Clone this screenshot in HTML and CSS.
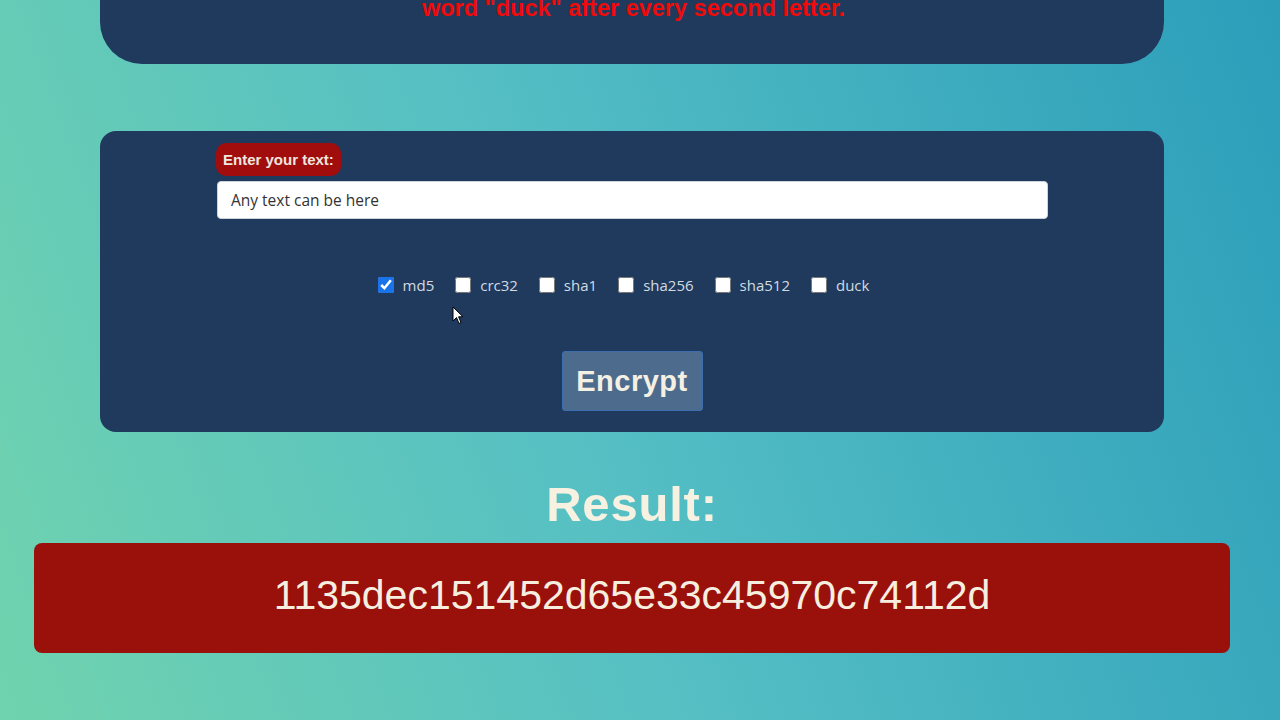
FILE: index.html
```html
<!DOCTYPE html>
<html lang="en">
<head>
<meta charset="utf-8">
<title>Encrypt</title>
<link rel="stylesheet" href="styles.css">
</head>
<body>
<div class="page">
  <section class="card card-info">
    <p class="info-text">word "duck" after every second letter.</p>
  </section>

  <section class="card card-form">
    <div class="field">
      <span class="field-label">Enter your text:</span>
      <input class="text-input" type="text" value="Any text can be here">
    </div>
    <div class="options">
      <label class="option"><input type="checkbox" checked><span>md5</span></label>
      <label class="option"><input type="checkbox"><span>crc32</span></label>
      <label class="option"><input type="checkbox"><span>sha1</span></label>
      <label class="option"><input type="checkbox"><span>sha256</span></label>
      <label class="option"><input type="checkbox"><span>sha512</span></label>
      <label class="option"><input type="checkbox"><span>duck</span></label>
    </div>
    <div class="actions">
      <button class="encrypt-btn" type="button">Encrypt</button>
    </div>
  </section>

  <h2 class="result-title">Result:</h2>
  <div class="result-box">1135dec151452d65e33c45970c74112d</div>
</div>
<svg class="cursor" width="12" height="19" viewBox="0 0 12 19" aria-hidden="true">
  <path d="M1 1 L1 15 L4.5 11.5 L7 17.5 L9 16.6 L6.6 10.8 L11 10.8 Z" fill="#fff" stroke="#000" stroke-width="1"/>
</svg>
</body>
</html>
```
FILE: styles.css
```css
html, body {
  margin: 0;
  padding: 0;
}
body {
  width: 1280px;
  height: 720px;
  overflow: hidden;
  position: relative;
  background: linear-gradient(70deg, #70d3ae 0%, #55bfc4 45%, #2c9eba 100%);
  font-family: "Liberation Sans", Arial, sans-serif;
}
.page {
  width: 1264px;
  display: flex;
  flex-direction: column;
  align-items: center;
}
.card {
  width: 1064px;
  background: #1f3a5d;
  box-sizing: border-box;
}
.card-info {
  margin-top: -60px;
  height: 124px;
  border-radius: 42px;
  padding-top: 56px;
}
.info-text {
  margin: 0;
  text-align: center;
  color: #f00a0a;
  font-weight: bold;
  font-size: 23.5px;
  line-height: 24px;
  padding-left: 3px;
}
.card-form {
  margin-top: 67px;
  height: 301px;
  border-radius: 16px;
  padding: 12px 116px 0;
  display: flex;
  flex-direction: column;
}
.field {
  display: flex;
  flex-direction: column;
  align-items: flex-start;
  gap: 5px;
}
.field-label {
  background: #a10d0d;
  color: #eee6df;
  font-weight: bold;
  font-size: 15px;
  line-height: 17px;
  padding: 8px 7px 8px 7px;
  border-radius: 10px;
}
.text-input {
  width: 831px;
  height: 38px;
  box-sizing: border-box;
  margin: 0 0 0 1px;
  border: 1px solid #cfd4da;
  border-radius: 4px;
  background: #fff;
  padding: 0 13px;
  font-family: "Open Sans", "Noto Sans", sans-serif;
  font-size: 15.5px;
  color: #333;
  outline: none;
}
.options {
  display: flex;
  justify-content: center;
  gap: 21px;
  margin-top: 56px;
  padding-right: 17px;
}
.option {
  display: flex;
  align-items: center;
  gap: 9px;
  font-family: "Open Sans", "Noto Sans", sans-serif;
  font-size: 15px;
  color: #d2dae2;
  line-height: 20px;
}
.option input {
  margin: 0;
  width: 16px;
  height: 16px;
  accent-color: #1a73e8;
}
.actions {
  display: flex;
  justify-content: center;
  margin-top: 56px;
}
.encrypt-btn {
  width: 141px;
  height: 60px;
  background: #4d6c8d;
  border: 1px solid #3d6fb0;
  border-radius: 3px;
  color: #f4f1e4;
  font-family: "Liberation Sans", Arial, sans-serif;
  font-size: 29px;
  font-weight: bold;
  letter-spacing: 0.5px;
  padding: 0;
}
.result-title {
  margin: 46px 0 0;
  color: #f6f1e1;
  font-size: 49px;
  line-height: 52px;
  font-weight: bold;
  letter-spacing: 0.8px;
}
.result-box {
  margin-top: 13px;
  width: 1196px;
  height: 110px;
  box-sizing: border-box;
  background: #9a100a;
  border-radius: 8px;
  color: #f6efe0;
  font-size: 41px;
  display: flex;
  align-items: center;
  justify-content: center;
  padding-bottom: 6px;
}
.cursor {
  position: absolute;
  left: 452px;
  top: 306px;
}
```
